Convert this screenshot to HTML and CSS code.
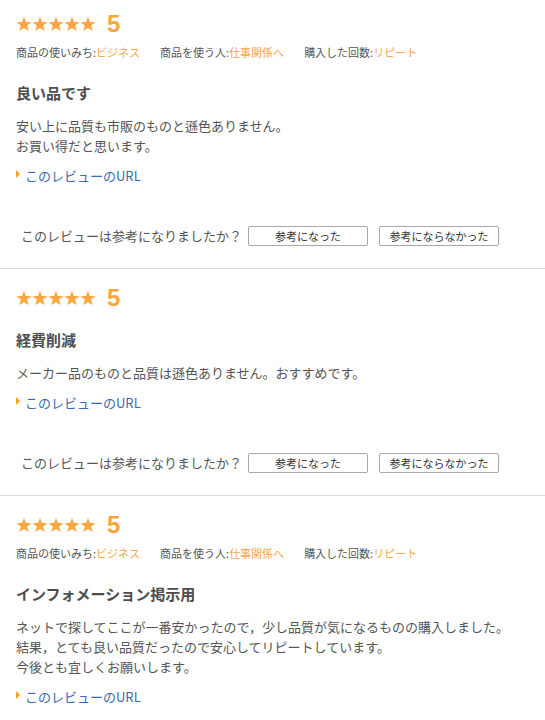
FILE: index.html
```html
<!DOCTYPE html>
<html lang="ja">
<head>
<meta charset="utf-8">
<title>レビュー</title>
<link rel="stylesheet" href="styles.css">
</head>
<body>
<svg class="defs" width="0" height="0" aria-hidden="true">
  <defs>
    <symbol id="star" viewBox="0 0 16 16">
      <path d="M8 0.8 L9.9 6.1 L15.6 6.2 L11.1 9.6 L12.7 15.1 L8 11.9 L3.3 15.1 L4.9 9.6 L0.4 6.2 L6.1 6.1 Z"/>
    </symbol>
  </defs>
</svg>

<div class="review review--first">
  <div class="rating">
    <span class="stars"><svg class="star"><use href="#star"/></svg><svg class="star"><use href="#star"/></svg><svg class="star"><use href="#star"/></svg><svg class="star"><use href="#star"/></svg><svg class="star"><use href="#star"/></svg></span>
    <span class="score">5</span>
  </div>
  <div class="meta">
    <span class="meta-item">商品の使いみち:<span class="meta-val">ビジネス</span></span>
    <span class="meta-item">商品を使う人:<span class="meta-val">仕事関係へ</span></span>
    <span class="meta-item">購入した回数:<span class="meta-val">リピート</span></span>
  </div>
  <h3 class="title">良い品です</h3>
  <p class="body">安い上に品質も市販のものと遜色ありません。<br>お買い得だと思います。</p>
  <a class="url" href="#">このレビューのURL</a>
  <div class="helpful">
    <span class="helpful-q">このレビューは参考になりましたか？</span>
    <button class="btn">参考になった</button>
    <button class="btn">参考にならなかった</button>
  </div>
</div>

<div class="review">
  <div class="rating">
    <span class="stars"><svg class="star"><use href="#star"/></svg><svg class="star"><use href="#star"/></svg><svg class="star"><use href="#star"/></svg><svg class="star"><use href="#star"/></svg><svg class="star"><use href="#star"/></svg></span>
    <span class="score">5</span>
  </div>
  <h3 class="title">経費削減</h3>
  <p class="body">メーカー品のものと品質は遜色ありません。おすすめです。</p>
  <a class="url" href="#">このレビューのURL</a>
  <div class="helpful">
    <span class="helpful-q">このレビューは参考になりましたか？</span>
    <button class="btn">参考になった</button>
    <button class="btn">参考にならなかった</button>
  </div>
</div>

<div class="review">
  <div class="rating">
    <span class="stars"><svg class="star"><use href="#star"/></svg><svg class="star"><use href="#star"/></svg><svg class="star"><use href="#star"/></svg><svg class="star"><use href="#star"/></svg><svg class="star"><use href="#star"/></svg></span>
    <span class="score">5</span>
  </div>
  <div class="meta">
    <span class="meta-item">商品の使いみち:<span class="meta-val">ビジネス</span></span>
    <span class="meta-item">商品を使う人:<span class="meta-val">仕事関係へ</span></span>
    <span class="meta-item">購入した回数:<span class="meta-val">リピート</span></span>
  </div>
  <h3 class="title">インフォメーション掲示用</h3>
  <p class="body">ネットで探してここが一番安かったので，少し品質が気になるものの購入しました。<br>結果，とても良い品質だったので安心してリピートしています。<br>今後とも宜しくお願いします。</p>
  <a class="url" href="#">このレビューのURL</a>
  <div class="helpful">
    <span class="helpful-q">このレビューは参考になりましたか？</span>
    <button class="btn">参考になった</button>
    <button class="btn">参考にならなかった</button>
  </div>
</div>
</body>
</html>
```
FILE: styles.css
```css
html, body {
  margin: 0;
  padding: 0;
  background: #fff;
}
body {
  font-family: "Noto Sans CJK JP", "Noto Sans", sans-serif;
  color: #555;
  font-size: 13px;
  line-height: 20px;
}
.defs {
  position: absolute;
  width: 0;
  height: 0;
  overflow: hidden;
}
.review {
  padding: 16px 16px 22px 16px;
  border-bottom: 1px solid #dcdcdc;
}
.review--first {
  padding-top: 11px;
}
.rating {
  display: flex;
  align-items: center;
  height: 26px;
}
.stars {
  display: flex;
  width: 80px;
}
.star {
  width: 16px;
  height: 16px;
  fill: #f9a63e;
}
.score {
  margin-left: 11px;
  font-family: "Liberation Sans", Arial, sans-serif;
  font-weight: bold;
  font-size: 24px;
  line-height: 26px;
  color: #f9a63e;
}
.meta {
  display: flex;
  margin-top: 7px;
  padding-bottom: 4px;
  font-size: 11px;
  line-height: 16px;
  color: #555;
}
.meta-item {
  margin-right: 20px;
}
.meta-val {
  color: #f7a546;
}
.title {
  margin: 19px 0 0 0;
  font-size: 15px;
  line-height: 20px;
  font-weight: bold;
  color: #4d4d4d;
}
.body {
  margin: 13px 0 0 0;
  font-size: 13px;
  line-height: 20px;
  color: #555;
}
.url {
  display: flex;
  align-items: center;
  margin-top: 10px;
  height: 20px;
  color: #3b69b0;
  text-decoration: none;
  font-size: 13px;
}
.url::before {
  content: "";
  display: block;
  width: 0;
  height: 0;
  border-top: 4px solid transparent;
  border-bottom: 4px solid transparent;
  border-left: 4px solid #f7a21b;
  margin-right: 5px;
  margin-top: -4px;
}
.helpful {
  display: flex;
  align-items: center;
  margin-top: 40px;
  height: 20px;
  padding-left: 5px;
}
.helpful-q {
  font-size: 13px;
  color: #555;
  margin-right: 6px;
}
.btn {
  width: 120px;
  height: 20px;
  margin: 0 11px 0 0;
  padding: 0;
  background: #fff;
  border: 1px solid #a9a9a9;
  border-radius: 2px;
  font-family: "Noto Sans CJK JP", sans-serif;
  font-size: 11px;
  line-height: 18px;
  color: #333;
}
```
